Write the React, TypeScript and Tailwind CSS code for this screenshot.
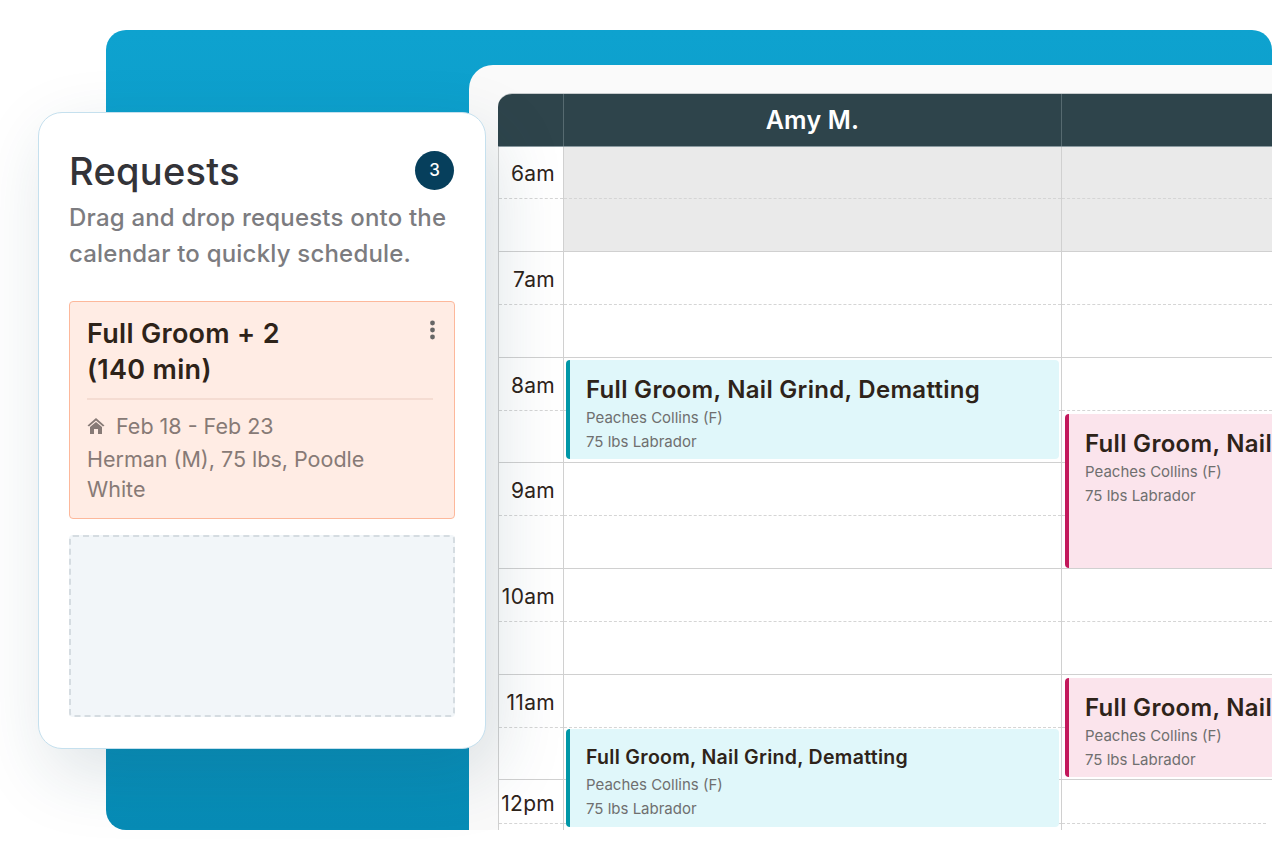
import React from 'react';

const hours = [
  { label: '6am', closed: true, half: 'h-[52px]', row: 'h-[105px]', dash: '', pad: 'pt-[17px]' },
  { label: '7am', closed: false, half: 'h-[53px]', row: 'h-[106px]', dash: '', pad: 'pt-[18px]' },
  { label: '8am', closed: false, half: 'h-[53px]', row: 'h-[105px]', dash: '', pad: 'pt-[18px]' },
  { label: '9am', closed: false, half: 'h-[53px]', row: 'h-[106px]', dash: '', pad: 'pt-[18px]' },
  { label: '10am', closed: false, half: 'h-[53px]', row: 'h-[106px]', dash: '', pad: 'pt-[18px]' },
  { label: '11am', closed: false, half: 'h-[53px]', row: 'h-[105px]', dash: '', pad: 'pt-[18px]' },
  { label: '12pm', closed: false, half: 'h-[44px]', row: 'h-[52px]', dash: 'mr-[6px]', pad: 'pt-[14px]' },
];

const Event = ({ tone, title, className, titleClass }: { tone: 'cyan' | 'pink'; title: string; className: string; titleClass: string }) => (
  <div
    className={`absolute rounded-[4px] border-l-4 pl-4 overflow-hidden ${
      tone === 'cyan' ? 'bg-[#e0f7fa] border-[#0097a7]' : 'bg-[#fbe4ec] border-[#c2185b]'
    } ${className}`}
  >
    <p className={`font-semibold text-[#2e2319] whitespace-nowrap ${titleClass}`}>{title}</p>
    <p className="text-[15px] leading-6 text-[#6f6f6f] whitespace-nowrap">Peaches Collins (F)</p>
    <p className="text-[15px] leading-6 text-[#6f6f6f] whitespace-nowrap">75 lbs Labrador</p>
  </div>
);

const Calendar = () => (
  <div className="relative rounded-tl-[14px] overflow-hidden border-t border-[#c8ccce]">
    <div className="grid grid-cols-[66px_498px_1fr] h-[53px] bg-[#2e444b] border-b border-[#8a9aa0]">
      <div className="border-r border-[#566a70]" />
      <div className="border-r border-[#566a70] flex items-center justify-center pt-px text-[25px] font-semibold tracking-[0.2px] text-white">Amy M.</div>
      <div />
    </div>
    {hours.map((h) => (
      <div key={h.label} className={`grid grid-cols-[66px_498px_1fr] bg-white border-b border-[#d0d0d0] ${h.row}`}>
        <div className="border-l border-r border-[#d0d0d0]">
          <div className={`border-b border-dashed border-[#d5d5d5] pr-2 text-right text-[21px] leading-5 tracking-[0.3px] text-[#2e2319] whitespace-nowrap ${h.pad} ${h.half}`}>
            {h.label}
          </div>
        </div>
        <div className={`border-r border-[#d0d0d0] ${h.closed ? 'bg-[#eaeaea]' : ''}`}>
          <div className={`border-b border-dashed border-[#d5d5d5] ${h.half}`} />
        </div>
        <div className={h.closed ? 'bg-[#eaeaea]' : ''}>
          <div className={`border-b border-dashed border-[#d5d5d5] ${h.dash} ${h.half}`} />
        </div>
      </div>
    ))}
    <Event tone="cyan" title="Full Groom, Nail Grind, Dematting" className="left-[68px] top-[266px] w-[493px] h-[99px] pt-[14px]" titleClass="text-[24px] leading-8 tracking-[0.3px]" />
    <Event tone="cyan" title="Full Groom, Nail Grind, Dematting" className="left-[68px] top-[635px] w-[493px] h-[98px] pt-[13px]" titleClass="text-[19.5px] leading-[31px] tracking-[0.3px]" />
    <Event tone="pink" title="Full Groom, Nail" className="left-[567px] top-[320px] w-[300px] h-[154px] pt-[14px]" titleClass="text-[24px] leading-8 tracking-[0.3px]" />
    <Event tone="pink" title="Full Groom, Nail" className="left-[567px] top-[584px] w-[300px] h-[99px] pt-[14px]" titleClass="text-[24px] leading-8 tracking-[0.3px]" />
  </div>
);

const RequestsCard = () => (
  <div className="absolute left-[38px] top-[112px] w-[448px] h-[637px] rounded-[24px] border border-[#c5e0ee] bg-white pl-[30px] pr-[30px] pt-[30px] shadow-[10px_24px_70px_rgba(30,70,90,0.15)]">
    <div className="flex items-start justify-between">
      <h1 className="text-[38px] leading-[56px] font-medium tracking-[0.3px] text-[#333338]">Requests</h1>
      <span className="mt-2 mr-px flex h-[39px] w-[39px] items-center justify-center rounded-full bg-[#063f5c] text-[17px] font-medium text-white">3</span>
    </div>
    <p className="mt-px text-[24px] leading-9 font-medium tracking-[0.2px] text-[#7c7c80] whitespace-nowrap">Drag and drop requests onto the<br />calendar to quickly schedule.</p>
    <div className="mt-[29px] h-[218px] rounded-[4px] border border-[#fdb89b] bg-[#ffece4] px-[17px] pt-[14px]">
      <div className="flex items-start justify-between">
        <p className="text-[27px] leading-9 font-semibold tracking-[0.3px] text-[#2e2319]">Full Groom + 2<br />(140 min)</p>
        <svg width="5" height="20" viewBox="0 0 5 20" className="mt-[4px] mr-[2px] fill-[#666]">
          <circle cx="2.5" cy="3" r="2.4" />
          <circle cx="2.5" cy="10" r="2.4" />
          <circle cx="2.5" cy="17" r="2.4" />
        </svg>
      </div>
      <div className="mt-[10px] mr-[4px] h-[2px] bg-[#f5dcd2]" />
      <div className="mt-[11px] flex items-center gap-[11px] text-[21.5px] leading-[30px] text-[#877a76]">
        <svg width="18" height="18" viewBox="0 0 18 18" className="fill-[#877a76]">
          <path d="M9 1 0.5 8.5 2 9.5 9 3.5 16 9.5 17.5 8.5Z" />
          <path d="M9 5 3 10V17H7V12H11V17H15V10Z" />
        </svg>
        Feb 18 - Feb 23
      </div>
      <p className="mt-[3px] text-[21.5px] leading-[30px] text-[#877a76] whitespace-nowrap">Herman (M), 75 lbs, Poodle<br />White</p>
    </div>
    <div className="mt-4 h-[182px] rounded-[4px] border-2 border-dashed border-[#d5dce1] bg-[#f2f6f9]" />
  </div>
);

export default function App() {
  return (
    <div className="relative h-[860px] w-[1286px] overflow-hidden bg-white font-['Inter',sans-serif]">
      <div className="ml-[106px] mt-[30px] flex h-[800px] w-[1166px] justify-end overflow-hidden rounded-l-[20px] rounded-tr-[20px] bg-gradient-to-b from-[#0ea2cf] to-[#078cb6] pt-[35px]">
        <div className="h-[765px] w-[803px] overflow-hidden rounded-tl-[24px] bg-[#fafafa] pl-[29px] pt-[28px]">
          <Calendar />
        </div>
      </div>
      <RequestsCard />
    </div>
  );
}
